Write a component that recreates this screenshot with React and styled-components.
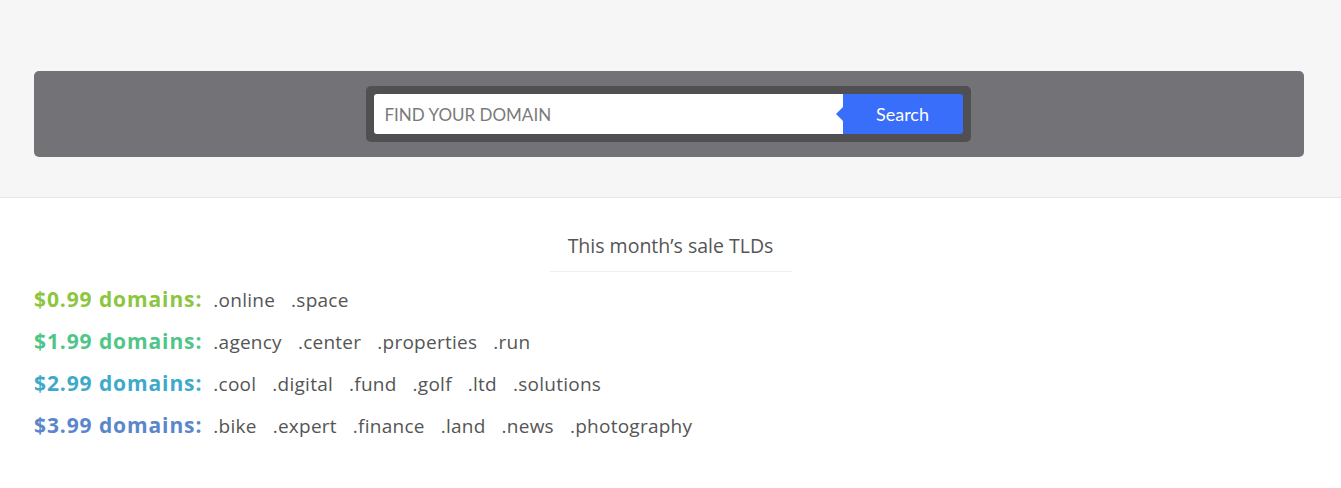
import React from "react";
import styled, { createGlobalStyle } from "styled-components";

const GlobalStyle = createGlobalStyle`
  body {
    margin: 0;
    background: #ffffff;
    font-family: Lato, "Open Sans", Arial, sans-serif;
  }
`;

const Hero = styled.div`
  background: #f6f6f6;
  border-bottom: 1px solid #e6e6e6;
  padding: 71px 37px 40px 34px;
`;

const Band = styled.div`
  background: #737277;
  border-radius: 5px;
  height: 86px;
  display: flex;
  align-items: center;
  justify-content: center;
  padding-right: 4px;
`;

const SearchBox = styled.form`
  display: flex;
  width: 589px;
  padding: 8px;
  background: #505052;
  border-radius: 5px;
  margin: 0 0 0 2px;
`;

const Input = styled.input`
  flex: 1;
  height: 40px;
  border: none;
  border-radius: 3px 0 0 3px;
  padding: 0 11px;
  font-family: inherit;
  font-size: 17px;
  color: #555;
  outline: none;
  &::placeholder {
    color: #7a7a7a;
  }
`;

const Button = styled.button`
  position: relative;
  width: 120px;
  height: 40px;
  border: none;
  border-radius: 0 3px 3px 0;
  background: #386ef9;
  color: #fff;
  font-family: inherit;
  font-size: 18px;
  cursor: pointer;
  &::before {
    content: "";
    position: absolute;
    left: -7px;
    top: 13px;
    border-top: 7px solid transparent;
    border-bottom: 7px solid transparent;
    border-right: 7px solid #386ef9;
  }
`;

const Sale = styled.section`
  padding: 36px 34px 40px;
  font-family: "Open Sans", Lato, Arial, sans-serif;
`;

const Title = styled.h2`
  margin: 0 auto 13px;
  width: 242px;
  text-align: center;
  font-size: 19.5px;
  line-height: 24px;
  font-weight: 400;
  color: #555;
  padding-bottom: 13px;
  border-bottom: 1px solid #efefef;
`;

const Row = styled.div`
  display: flex;
  align-items: baseline;
  height: 42px;
  line-height: 28px;
`;

const Price = styled.span`
  color: ${(p) => p.color};
  font-size: 21px;
  font-weight: 700;
  letter-spacing: 0.9px;
  margin-right: 11px;
`;

const Tld = styled.span`
  color: #555;
  font-size: 19px;
  letter-spacing: 0.25px;
  margin-right: 16px;
`;

const rows = [
  { price: "$0.99", color: "#8cc63f", tlds: ["online", "space"] },
  { price: "$1.99", color: "#4fc588", tlds: ["agency", "center", "properties", "run"] },
  { price: "$2.99", color: "#3ea9c9", tlds: ["cool", "digital", "fund", "golf", "ltd", "solutions"] },
  { price: "$3.99", color: "#5a86cc", tlds: ["bike", "expert", "finance", "land", "news", "photography"] },
];

export default function App() {
  return (
    <>
      <GlobalStyle />
      <Hero>
        <Band>
          <SearchBox onSubmit={(e) => e.preventDefault()}>
            <Input placeholder="FIND YOUR DOMAIN" />
            <Button type="submit">Search</Button>
          </SearchBox>
        </Band>
      </Hero>
      <Sale>
        <Title>This month’s sale TLDs</Title>
        {rows.map((r) => (
          <Row key={r.price}>
            <Price color={r.color}>{r.price} domains:</Price>
            {r.tlds.map((t) => (
              <Tld key={t}>.{t}</Tld>
            ))}
          </Row>
        ))}
      </Sale>
    </>
  );
}
